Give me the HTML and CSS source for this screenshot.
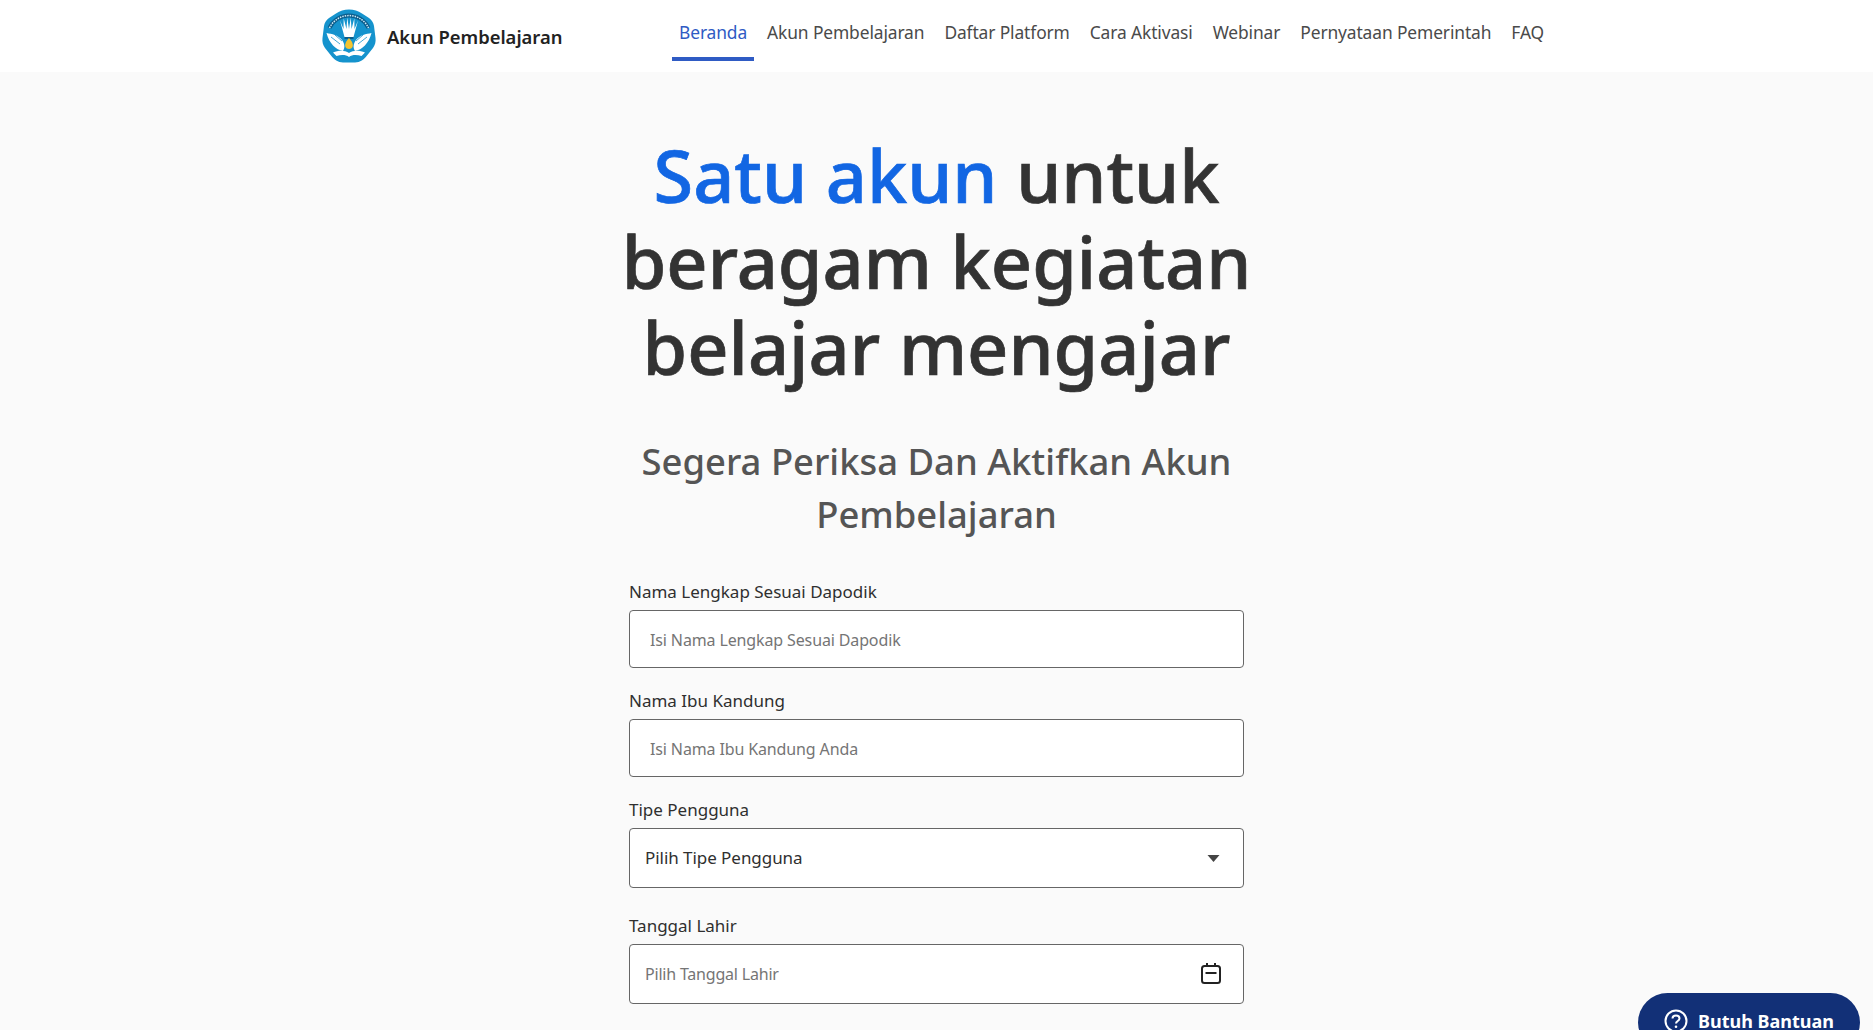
FILE: index.html
```html
<!DOCTYPE html>
<html lang="id">
<head>
<meta charset="utf-8">
<title>Akun Pembelajaran</title>
<link rel="stylesheet" href="styles.css">
</head>
<body>
<header class="site-header">
  <div class="header-inner">
    <a class="brand" href="#">
      <svg class="brand-logo" viewBox="0 0 54 54" aria-hidden="true">
        <path d="M27 0.500C32 0.500 36 2 40 4.500L47 9C50 11 51.500 14 52 17L53.500 29C54 33 53 36 51 39L45 46.500C42 50.500 38 53.500 33 53.500H21C16 53.500 12 50.500 9 46.500L3 39C1 36 0 33 0.500 29L2 17C2.500 14 4 11 7 9L14 4.500C18 2 22 0.500 27 0.500Z" fill="#1593cd"/>
        <path d="M7.500 19A21.500 21.500 0 0 1 46.500 19" fill="none" stroke="#0a5d8c" stroke-width="4"/>
        <path d="M7.500 19A21.500 21.500 0 0 1 46.500 19" fill="none" stroke="#cfe8f5" stroke-width="1.500" stroke-dasharray="1.500 1"/>
        <path d="M18 11.500L22.500 28H31.500L36 11.500L32.500 20L32.300 9.500L29.500 20L28.800 8.500L27 20L25.200 8.500L24.500 20L21.700 9.500L21.500 20Z" fill="#fff"/>
        <path d="M22.500 28H31.500V30H22.500Z" fill="#0a5d8c"/>
        <path d="M4.500 24C10 25 16 26 20 31C23 35 23 39 21 42C14 41 7 34 4.500 24Z" fill="#fff"/>
        <path d="M49.500 24C44 25 38 26 34 31C31 35 31 39 33 42C40 41 47 34 49.500 24Z" fill="#fff"/>
        <path d="M9 28L18 35M13 26L20 32M45 28L36 35M41 26L34 32" stroke="#1593cd" stroke-width="0.800"/>
        <path d="M27 29C30 32.500 31.500 35 30.500 38C29.500 40.500 24.500 40.500 23.500 38C22.500 35 24 32.500 27 29Z" fill="#f4c32f"/>
        <path d="M11 43.500C17 41 23 41.500 27 44C31 41.500 37 41 43 43.500L39.500 47C35 45.500 30 45.500 27 48C24 45.500 19 45.500 14.500 47Z" fill="#fff"/>
      </svg>
      <span class="brand-name">Akun Pembelajaran</span>
    </a>
    <nav class="main-nav">
      <a class="nav-link is-active" href="#">Beranda</a>
      <a class="nav-link" href="#">Akun Pembelajaran</a>
      <a class="nav-link" href="#">Daftar Platform</a>
      <a class="nav-link" href="#">Cara Aktivasi</a>
      <a class="nav-link" href="#">Webinar</a>
      <a class="nav-link" href="#">Pernyataan Pemerintah</a>
      <a class="nav-link" href="#">FAQ</a>
    </nav>
  </div>
</header>
<main class="hero">
  <h1 class="hero-title"><span class="accent">Satu akun</span> untuk beragam kegiatan belajar mengajar</h1>
  <h2 class="hero-sub">Segera Periksa Dan Aktifkan Akun Pembelajaran</h2>
  <form class="check-form">
    <div class="field">
      <label class="field-label" for="nama">Nama Lengkap Sesuai Dapodik</label>
      <input class="control control-wide" id="nama" type="text" placeholder="Isi Nama Lengkap Sesuai Dapodik">
    </div>
    <div class="field">
      <label class="field-label" for="ibu">Nama Ibu Kandung</label>
      <input class="control control-wide" id="ibu" type="text" placeholder="Isi Nama Ibu Kandung Anda">
    </div>
    <div class="field field-tall">
      <label class="field-label" for="tipe">Tipe Pengguna</label>
      <div class="control-wrap">
        <select class="control control-select" id="tipe"><option>Pilih Tipe Pengguna</option></select>
        <svg class="control-icon arrow-icon" viewBox="0 0 12 7" aria-hidden="true"><path d="M0 0H12L6 7Z" fill="#444"/></svg>
      </div>
    </div>
    <div class="field">
      <label class="field-label" for="tgl">Tanggal Lahir</label>
      <div class="control-wrap">
        <input class="control control-date" id="tgl" type="text" placeholder="Pilih Tanggal Lahir">
        <svg class="control-icon calendar-icon" viewBox="0 0 20 21" aria-hidden="true"><rect x="1" y="3" width="18" height="17" rx="2.500" fill="none" stroke="#222" stroke-width="2"/><path d="M6 0V4M14 0V4M4.500 10H15.500" fill="none" stroke="#222" stroke-width="2"/></svg>
      </div>
    </div>
  </form>
</main>
<a class="help-button" href="#">
  <svg class="help-icon" viewBox="0 0 24 24" aria-hidden="true"><circle cx="12" cy="12" r="10.500" fill="none" stroke="#fff" stroke-width="2"/><path d="M8.500 9.500C8.500 7.500 10 6.500 12 6.500C14 6.500 15.500 7.700 15.500 9.400C15.500 12 12 12 12 14.500" fill="none" stroke="#fff" stroke-width="2"/><circle cx="12" cy="17.800" r="1.300" fill="#fff"/></svg>
  <span>Butuh Bantuan</span>
</a>
</body>
</html>
```
FILE: styles.css
```css
* { box-sizing: border-box; }
html, body { height: 100%; overflow: hidden; }
body {
  margin: 0;
  background: #fafafa;
  color: #2f2f2f;
  font-family: "Noto Sans", "Open Sans", sans-serif;
}
a { text-decoration: none; color: inherit; }

.site-header { height: 72px; background: #fff; }
.header-inner {
  width: 1231px;
  height: 100%;
  margin: 0 auto;
  padding-left: 1px;
  padding-right: 1px;
  display: flex;
  align-items: flex-start;
  justify-content: space-between;
}
.brand { display: flex; align-items: center; gap: 11px; height: 72px; }
.brand-logo { width: 54px; height: 54px; }
.brand-name { font-size: 18.4px; font-weight: 600; color: #222; }
.main-nav { display: flex; gap: 6px; }
.nav-link {
  height: 61px;
  padding: 20px 7px 0;
  font-size: 17.4px;
  line-height: 25px;
  color: #4a4a4a;
  border-bottom: 4px solid transparent;
  letter-spacing: -0.12px;
}
.nav-link.is-active { color: #2f5bc4; border-bottom-color: #2f5bc4; }

.hero { width: 640px; margin: 0 auto; padding-top: 60px; text-align: center; }
.hero-title {
  margin: 0;
  font-size: 72px;
  line-height: 86px;
  font-weight: 500;
  -webkit-text-stroke: 0.7px currentColor;
  color: #333;
}
.accent { color: #1266e3; }
.hero-sub {
  margin: 45px 0 0;
  font-size: 36.4px;
  line-height: 53px;
  font-weight: 500;
  color: #555;
}
.check-form { width: 615px; margin: 39px auto 0; text-align: left; }
.field { margin-bottom: 21px; }
.field-tall { margin-bottom: 26px; }
.field-label { display: block; font-size: 17px; line-height: 24px; margin-bottom: 6px; color: #2f2f2f; }
.control {
  display: block;
  width: 100%;
  background: #fff;
  border: 1px solid #666;
  border-radius: 4px;
  font-family: inherit;
  font-size: 16px;
  color: #2f2f2f;
  outline: 0;
  appearance: none;
  letter-spacing: -0.13px;
}
.control::placeholder { color: #757575; opacity: 1; }
.control-wide { height: 58px; padding: 2px 20px 0; }
.control-select { height: 60px; padding: 0 15px 2px; font-size: 17px; letter-spacing: -0.05px; }
.control-date { height: 60px; padding: 0 15px; letter-spacing: -0.2px; }
.control-wrap { position: relative; }
.control-icon { position: absolute; }
.arrow-icon { width: 13px; height: 7px; right: 24px; top: 27px; }
.calendar-icon { width: 20px; height: 21px; right: 23px; top: 19px; }

.help-button {
  position: fixed;
  right: 13px;
  bottom: -22px;
  width: 222px;
  height: 59px;
  padding-bottom: 4px;
  border-radius: 30px;
  background: #123077;
  color: #fff;
  font-size: 18px;
  font-weight: 700;
  display: flex;
  align-items: center;
  justify-content: center;
  gap: 10px;
}
.help-icon { width: 24px; height: 24px; }
```
